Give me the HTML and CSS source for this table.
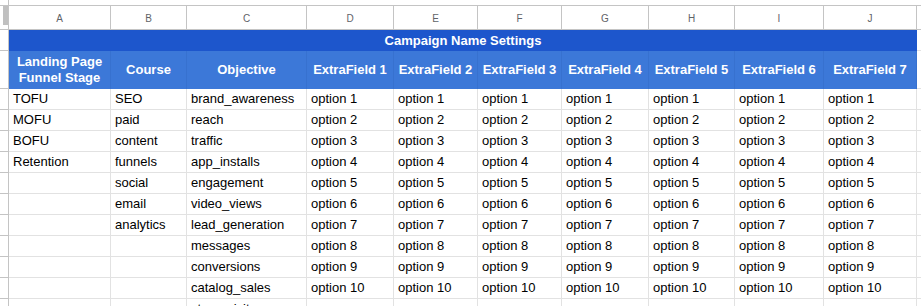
FILE: index.html
```html
<!DOCTYPE html>
<html>
<head>
<meta charset="utf-8">
<link rel="stylesheet" href="styles.css">
</head>
<body>
<div class="sheet">
  <div class="strip rh"></div>
  <div class="strip wide"></div>

  <div class="colh corner"><span class="freeze"></span></div>
  <div class="colh">A</div><div class="colh">B</div><div class="colh">C</div><div class="colh">D</div><div class="colh">E</div><div class="colh">F</div><div class="colh">G</div><div class="colh">H</div><div class="colh">I</div><div class="colh">J</div><div class="colh last"></div>

  <div class="rhc"></div>
  <div class="title">Campaign Name Settings</div>
  <div class="tail tail-t"></div>

  <div class="rhc"></div>
  <div class="hd">Landing Page<br>Funnel Stage</div>
  <div class="hd">Course</div>
  <div class="hd">Objective</div>
  <div class="hd">ExtraField 1</div>
  <div class="hd">ExtraField 2</div>
  <div class="hd">ExtraField 3</div>
  <div class="hd">ExtraField 4</div>
  <div class="hd">ExtraField 5</div>
  <div class="hd">ExtraField 6</div>
  <div class="hd">ExtraField 7</div>
  <div class="tail"></div>

  <div class="rhc"></div><div class="c">TOFU</div><div class="c">SEO</div><div class="c">brand_awareness</div><div class="c">option 1</div><div class="c">option 1</div><div class="c">option 1</div><div class="c">option 1</div><div class="c">option 1</div><div class="c">option 1</div><div class="c">option 1</div><div class="c end"></div>
  <div class="rhc"></div><div class="c">MOFU</div><div class="c">paid</div><div class="c">reach</div><div class="c">option 2</div><div class="c">option 2</div><div class="c">option 2</div><div class="c">option 2</div><div class="c">option 2</div><div class="c">option 2</div><div class="c">option 2</div><div class="c end"></div>
  <div class="rhc"></div><div class="c">BOFU</div><div class="c">content</div><div class="c">traffic</div><div class="c">option 3</div><div class="c">option 3</div><div class="c">option 3</div><div class="c">option 3</div><div class="c">option 3</div><div class="c">option 3</div><div class="c">option 3</div><div class="c end"></div>
  <div class="rhc"></div><div class="c">Retention</div><div class="c">funnels</div><div class="c">app_installs</div><div class="c">option 4</div><div class="c">option 4</div><div class="c">option 4</div><div class="c">option 4</div><div class="c">option 4</div><div class="c">option 4</div><div class="c">option 4</div><div class="c end"></div>
  <div class="rhc"></div><div class="c"></div><div class="c">social</div><div class="c">engagement</div><div class="c">option 5</div><div class="c">option 5</div><div class="c">option 5</div><div class="c">option 5</div><div class="c">option 5</div><div class="c">option 5</div><div class="c">option 5</div><div class="c end"></div>
  <div class="rhc"></div><div class="c"></div><div class="c">email</div><div class="c">video_views</div><div class="c">option 6</div><div class="c">option 6</div><div class="c">option 6</div><div class="c">option 6</div><div class="c">option 6</div><div class="c">option 6</div><div class="c">option 6</div><div class="c end"></div>
  <div class="rhc"></div><div class="c"></div><div class="c">analytics</div><div class="c">lead_generation</div><div class="c">option 7</div><div class="c">option 7</div><div class="c">option 7</div><div class="c">option 7</div><div class="c">option 7</div><div class="c">option 7</div><div class="c">option 7</div><div class="c end"></div>
  <div class="rhc"></div><div class="c"></div><div class="c"></div><div class="c">messages</div><div class="c">option 8</div><div class="c">option 8</div><div class="c">option 8</div><div class="c">option 8</div><div class="c">option 8</div><div class="c">option 8</div><div class="c">option 8</div><div class="c end"></div>
  <div class="rhc"></div><div class="c"></div><div class="c"></div><div class="c">conversions</div><div class="c">option 9</div><div class="c">option 9</div><div class="c">option 9</div><div class="c">option 9</div><div class="c">option 9</div><div class="c">option 9</div><div class="c">option 9</div><div class="c end"></div>
  <div class="rhc"></div><div class="c"></div><div class="c"></div><div class="c">catalog_sales</div><div class="c">option 10</div><div class="c">option 10</div><div class="c">option 10</div><div class="c">option 10</div><div class="c">option 10</div><div class="c">option 10</div><div class="c">option 10</div><div class="c end"></div>
  <div class="rhc"></div><div class="c"></div><div class="c"></div><div class="c">store_visits</div><div class="c"></div><div class="c"></div><div class="c"></div><div class="c"></div><div class="c"></div><div class="c"></div><div class="c"></div><div class="c end"></div>
</div>
</body>
</html>
```

FILE: styles.css
```css
html, body {
  margin: 0;
  padding: 0;
  background: #ffffff;
  overflow: hidden;
}

.sheet {
  display: grid;
  grid-template-columns: 9px 102px 76px 120px 87px 84px 84px 87px 86px 89px 93px 1fr;
  grid-template-rows: 6px 24px 21px 38px repeat(11, 21px);
  font-family: "Liberation Sans", Arial, sans-serif;
  font-size: 13px;
  color: #000000;
}

.sheet > div {
  box-sizing: border-box;
  overflow: hidden;
  white-space: nowrap;
}

.strip {
  border-bottom: 1px solid #c4c4c4;
}
.strip.rh {
  border-right: 1px solid #c4c4c4;
}
.strip.wide {
  grid-column: 2 / 13;
}

.colh {
  border-right: 1px solid #c4c4c4;
  border-bottom: 1px solid #c4c4c4;
  font-size: 10px;
  color: #5f6368;
  display: flex;
  align-items: center;
  justify-content: center;
  padding-top: 1px;
}
.colh.last {
  border-right: none;
}
.colh.corner {
  justify-content: flex-start;
  align-items: flex-start;
  padding: 0 0 0 3px;
}
.freeze {
  display: block;
  width: 5px;
  height: 19px;
  background: #c0c0c0;
}

.rhc {
  border-right: 1px solid #c4c4c4;
  border-bottom: 1px solid #c4c4c4;
}

.title {
  grid-column: 2 / 12;
  background: #1d56cc;
  color: #ffffff;
  font-weight: bold;
  text-align: center;
  line-height: 16px;
  padding-top: 3px;
}

.tail {
  border-bottom: 1px solid #e2e2e2;
}
.tail-t {
  border-bottom-color: #e2e2e2;
}

.hd {
  background: #3c78d8;
  color: #ffffff;
  font-weight: bold;
  line-height: 16px;
  text-align: center;
  display: flex;
  align-items: center;
  justify-content: center;
  border-right: 1px solid #3771cf;
}

.c {
  border-right: 1px solid #e2e2e2;
  border-bottom: 1px solid #e2e2e2;
  line-height: 16px;
  padding: 2px 3px 0 4px;
}
.c.end {
  border-right: none;
}
```
